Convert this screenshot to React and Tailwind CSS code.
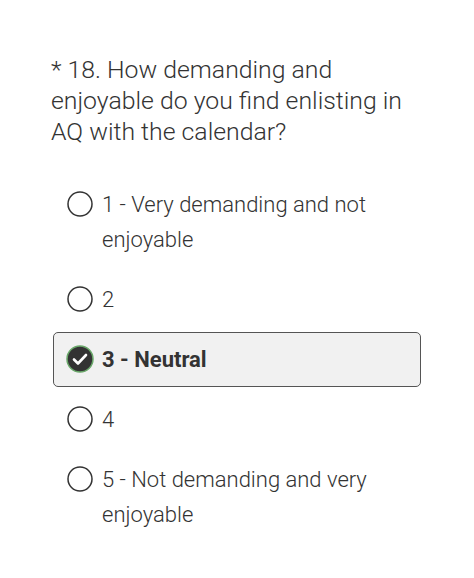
import { useState } from 'react';

// Survey answer choices
const choices = [
    { id: 1, label: '1 - Very demanding and not enjoyable' },
    { id: 2, label: '2' },
    { id: 3, label: '3 - Neutral' },
    { id: 4, label: '4' },
    { id: 5, label: '5 - Not demanding and very enjoyable' },
];

function RadioMark({ checked }) {
    if (checked) {
        return (
            <svg width="28" height="28" viewBox="0 0 28 28" className="shrink-0">
                <circle cx="14" cy="14" r="13" fill="#333333" stroke="#6aa86a" strokeWidth="1.5" />
                <path d="M8 14.5l4 4 8-8.5" fill="none" stroke="#ffffff" strokeWidth="2.6" strokeLinecap="round" strokeLinejoin="round" />
            </svg>
        );
    }
    return (
        <svg width="28" height="28" viewBox="0 0 28 28" className="shrink-0">
            <circle cx="14" cy="14" r="12" fill="#ffffff" stroke="#333333" strokeWidth="1.5" />
        </svg>
    );
}

export default function App() {
    const [selected, setSelected] = useState(3);

    return (
        <div
            className="min-h-[578px] w-[474px] bg-white pt-[54px] pl-[51px] text-[#333333]"
            style={{ fontFamily: 'Roboto, "Liberation Sans", sans-serif' }}
        >
            {/* Question heading */}
            <h2 className="pr-[50px] text-[24.8px] leading-[31px] font-light">
                * 18. How demanding and enjoyable do you find enlisting in AQ with the calendar?
            </h2>

            {/* Answer options */}
            <div className="mt-[30px] ml-[2px] mr-[53px] flex flex-col gap-[5px]">
                {choices.map((choice) => {
                    const isChecked = selected === choice.id;
                    return (
                        <label
                            key={choice.id}
                            onClick={() => setSelected(choice.id)}
                            className={
                                isChecked
                                    ? 'flex items-start gap-[8px] rounded-[5px] border border-[#555555] bg-[#f1f1f1] py-[9px] pl-[12px] pr-3 cursor-pointer'
                                    : 'flex items-start gap-[8px] rounded-[5px] border border-transparent py-[9px] pl-[12px] pr-3 cursor-pointer'
                            }
                        >
                            <span className="mt-[3px]">
                                <RadioMark checked={isChecked} />
                            </span>
                            <span
                                className={
                                    isChecked
                                        ? 'text-[22px] leading-[35px] font-bold'
                                        : 'text-[22px] leading-[35px] font-light'
                                }
                            >
                                {choice.label}
                            </span>
                        </label>
                    );
                })}
            </div>
        </div>
    );
}
